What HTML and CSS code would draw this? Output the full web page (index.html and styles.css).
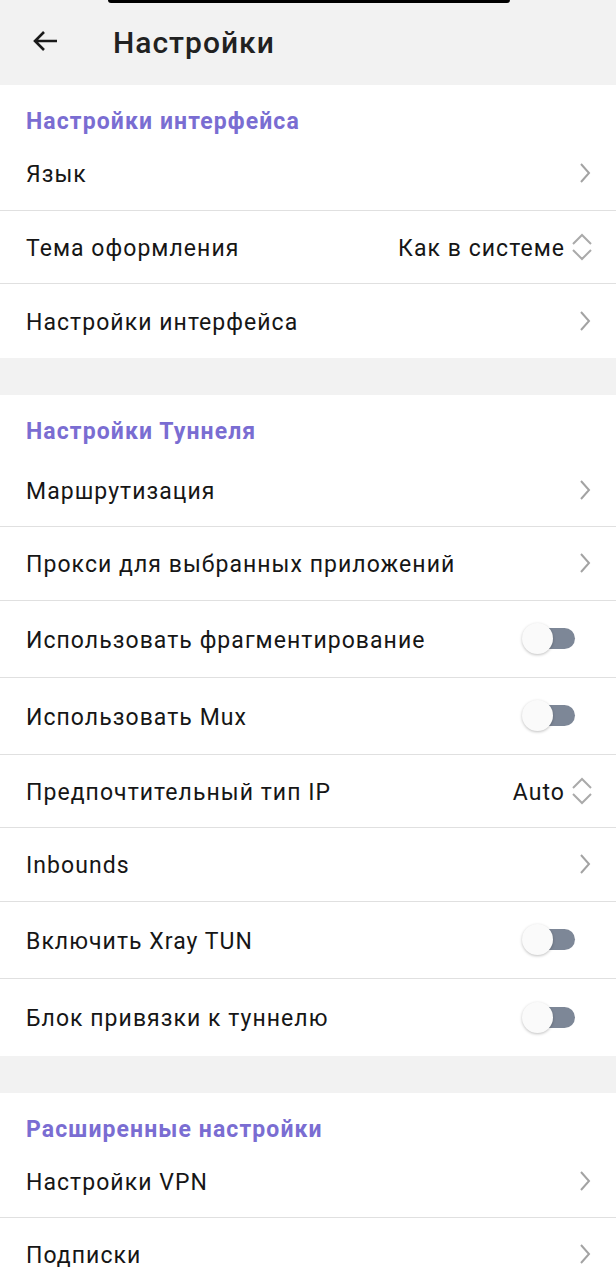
FILE: index.html
```html
<!DOCTYPE html>
<html lang="ru">
<head>
    <meta charset="UTF-8">
    <meta name="viewport" content="width=device-width, initial-scale=1.0">
    <title>Настройки</title>
    <link rel="stylesheet" href="styles.css">
</head>
<body>
    <div class="notch"></div>
    <header class="topbar">
        <svg class="back" width="26" height="22" viewBox="0 0 26 22">
            <path d="M25 11H3M12 2L3 11l9 9" fill="none" stroke="#1a1a1a" stroke-width="2.6"/>
        </svg>
        <h1>Настройки</h1>
    </header>

    <section class="group">
        <div class="group-title">Настройки интерфейса</div>
        <div class="row">
            <span class="label">Язык</span>
            <svg class="chevron" width="12" height="22" viewBox="0 0 12 22"><path d="M2 2l8 9-8 9" fill="none" stroke="#a3a3a3" stroke-width="2"/></svg>
        </div>
        <div class="row">
            <span class="label">Тема оформления</span>
            <span class="value"><span class="value-text">Как в системе</span>
                <svg class="updown" width="22" height="28" viewBox="0 0 22 28"><path d="M2 11l9-9 9 9M2 17l9 9 9-9" fill="none" stroke="#aaaaaa" stroke-width="2"/></svg>
            </span>
        </div>
        <div class="row last">
            <span class="label">Настройки интерфейса</span>
            <svg class="chevron" width="12" height="22" viewBox="0 0 12 22"><path d="M2 2l8 9-8 9" fill="none" stroke="#a3a3a3" stroke-width="2"/></svg>
        </div>
    </section>

    <section class="group">
        <div class="group-title tall">Настройки Туннеля</div>
        <div class="row">
            <span class="label">Маршрутизация</span>
            <svg class="chevron" width="12" height="22" viewBox="0 0 12 22"><path d="M2 2l8 9-8 9" fill="none" stroke="#a3a3a3" stroke-width="2"/></svg>
        </div>
        <div class="row">
            <span class="label">Прокси для выбранных приложений</span>
            <svg class="chevron" width="12" height="22" viewBox="0 0 12 22"><path d="M2 2l8 9-8 9" fill="none" stroke="#a3a3a3" stroke-width="2"/></svg>
        </div>
        <div class="row switch-row">
            <span class="label">Использовать фрагментирование</span>
            <span class="switch"><span class="knob"></span></span>
        </div>
        <div class="row switch-row">
            <span class="label">Использовать Mux</span>
            <span class="switch"><span class="knob"></span></span>
        </div>
        <div class="row">
            <span class="label">Предпочтительный тип IP</span>
            <span class="value"><span class="value-text">Auto</span>
                <svg class="updown" width="22" height="28" viewBox="0 0 22 28"><path d="M2 11l9-9 9 9M2 17l9 9 9-9" fill="none" stroke="#aaaaaa" stroke-width="2"/></svg>
            </span>
        </div>
        <div class="row">
            <span class="label">Inbounds</span>
            <svg class="chevron" width="12" height="22" viewBox="0 0 12 22"><path d="M2 2l8 9-8 9" fill="none" stroke="#a3a3a3" stroke-width="2"/></svg>
        </div>
        <div class="row switch-row">
            <span class="label">Включить Xray TUN</span>
            <span class="switch"><span class="knob"></span></span>
        </div>
        <div class="row switch-row last">
            <span class="label">Блок привязки к туннелю</span>
            <span class="switch"><span class="knob"></span></span>
        </div>
    </section>

    <section class="group">
        <div class="group-title">Расширенные настройки</div>
        <div class="row">
            <span class="label">Настройки VPN</span>
            <svg class="chevron" width="12" height="22" viewBox="0 0 12 22"><path d="M2 2l8 9-8 9" fill="none" stroke="#a3a3a3" stroke-width="2"/></svg>
        </div>
        <div class="row">
            <span class="label">Подписки</span>
            <svg class="chevron" width="12" height="22" viewBox="0 0 12 22"><path d="M2 2l8 9-8 9" fill="none" stroke="#a3a3a3" stroke-width="2"/></svg>
        </div>
    </section>
</body>
</html>
```

FILE: styles.css
```css
body {
    margin: 0;
    padding: 0;
    font-family: Roboto, "Noto Sans", sans-serif;
    background-color: #f2f2f2;
    color: #161616;
    position: relative;
}

.notch {
    position: absolute;
    top: 0;
    left: 108px;
    width: 402px;
    height: 3px;
    background-color: #000000;
    border-radius: 0 0 3px 3px;
}

.topbar {
    height: 85px;
    display: flex;
    align-items: center;
    padding-left: 32px;
    box-sizing: border-box;
}

.back {
    margin-top: -3px;
}

.topbar h1 {
    margin: 0 0 0 55px;
    font-size: 30px;
    font-weight: 500;
    letter-spacing: 1px;
    color: #212121;
}

.group {
    background-color: #ffffff;
    margin-bottom: 37px;
}

.group-title {
    height: 52px;
    padding: 23px 0 0 26px;
    box-sizing: border-box;
    font-size: 23px;
    font-weight: 700;
    letter-spacing: 1.1px;
    color: #7a6dd2;
}

.group-title.tall {
    height: 59px;
}

.row {
    height: 73.5px;
    display: flex;
    align-items: center;
    justify-content: space-between;
    padding: 0 25px 0 26px;
    border-bottom: 1.5px solid #e0e0e0;
    box-sizing: border-box;
}

.row.switch-row {
    height: 77px;
}

.row.last {
    border-bottom: none;
}

.label {
    font-size: 23px;
    letter-spacing: 1.05px;
    margin-top: 3px;
}

.value {
    display: flex;
    align-items: center;
    gap: 6px;
    font-size: 23px;
    letter-spacing: 1.05px;
    margin-right: -2px;
}

.value-text {
    margin-top: 4px;
}

.switch {
    position: relative;
    width: 50px;
    height: 21px;
    background-color: #7d8797;
    border-radius: 11px;
    margin-right: 16px;
}

.knob {
    position: absolute;
    left: -3px;
    top: -5px;
    width: 31px;
    height: 31px;
    border-radius: 50%;
    background-color: #fafafa;
    box-shadow: 0 1px 3px rgba(0, 0, 0, 0.25);
}
```
